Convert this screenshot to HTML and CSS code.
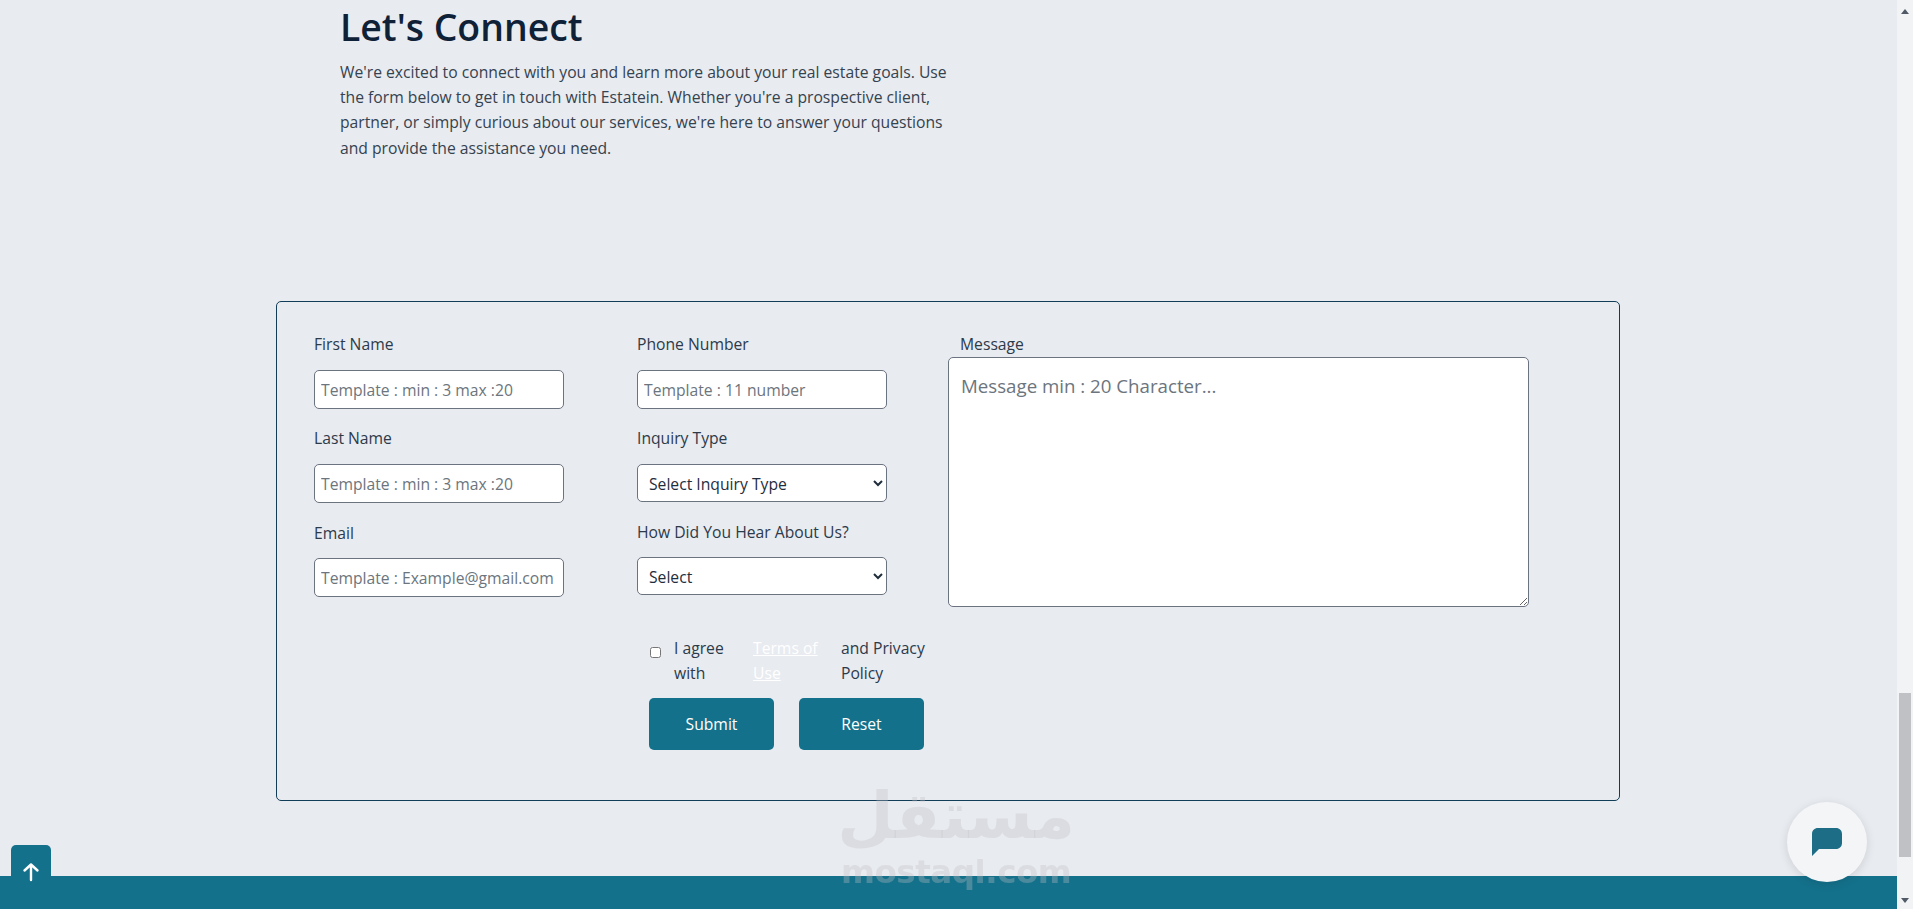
FILE: index.html
```html
<!DOCTYPE html>
<html lang="en">
<head>
<meta charset="utf-8">
<title>Let's Connect</title>
<link rel="stylesheet" href="styles.css">
</head>
<body>
<main class="page">
  <section class="intro">
    <h1>Let's Connect</h1>
    <p>We're excited to connect with you and learn more about your real estate goals. Use the form below to get in touch with Estatein. Whether you're a prospective client, partner, or simply curious about our services, we're here to answer your questions and provide the assistance you need.</p>
  </section>
  <form class="panel">
    <div class="fields">
      <div class="col col-a">
        <div class="field"><label>First Name</label><input type="text" placeholder="Template : min : 3 max :20"></div>
        <div class="field"><label>Last Name</label><input type="text" placeholder="Template : min : 3 max :20"></div>
        <div class="field"><label>Email</label><input type="text" placeholder="Template : Example@gmail.com"></div>
      </div>
      <div class="col col-b">
        <div class="field"><label>Phone Number</label><input type="text" placeholder="Template : 11 number"></div>
        <div class="field"><label>Inquiry Type</label><select><option>Select Inquiry Type</option></select></div>
        <div class="field"><label>How Did You Hear About Us?</label><select><option>Select</option></select></div>
      </div>
      <div class="col col-c">
        <label class="msg-label">Message</label>
        <textarea placeholder="Message min : 20 Character..."></textarea>
      </div>
    </div>
    <div class="consent">
      <input type="checkbox" class="check">
      <span>I agree with</span>
      <a href="#" class="terms">Terms of Use</a>
      <span>and Privacy Policy</span>
    </div>
    <div class="actions">
      <button type="button" class="btn">Submit</button>
      <button type="button" class="btn">Reset</button>
    </div>
  </form>
  <footer class="footer"></footer>
</main>

<div class="to-top">
  <svg width="18" height="20" viewBox="0 0 18 20" fill="none" stroke="#fff" stroke-width="2.4" stroke-linecap="round" stroke-linejoin="round"><path d="M9 18V2.5M2.5 8.5 9 2.5l6.500 6"/></svg>
</div>

<div class="watermark">
  <div class="wm-ar" lang="ar" dir="rtl">مستقل</div>
  <div class="wm-en">mostaql.com</div>
</div>

<div class="chat">
  <svg width="30" height="28" viewBox="0 0 30 28"><path d="M6 0H24C27.500 0 30 2.500 30 6V15C30 18.500 27.500 21 24 21H7L0 28V6C0 2.500 2.500 0 6 0Z" fill="#1e6d87"/></svg>
</div>

<div class="scrollbar">
  <span class="sb-up"></span>
  <span class="sb-thumb"></span>
  <span class="sb-down"></span>
</div>
</body>
</html>
```
FILE: styles.css
```css
* { box-sizing: border-box; }
html, body { margin: 0; height: 909px; overflow: hidden; }
body {
  background: #e8ebf0;
  color: #2c3a4a;
  font-family: "Open Sans", "Noto Sans", sans-serif;
  font-size: 15.7px;
  line-height: 25px;
}
.page { height: 909px; overflow: hidden; padding-right: 16px; }

.intro { margin-left: 340px; width: 618px; height: 301px; }
.intro h1 {
  margin: 0;
  padding-top: 3px;
  height: 60px;
  font-size: 37.4px;
  line-height: 48px;
  font-weight: 600;
  color: #0f2137;
}
.intro p { margin: 0; line-height: 25.2px; color: #35424f; }

.panel {
  margin-left: 276px;
  width: 1344px;
  height: 500px;
  border: 1px solid #123d58;
  border-radius: 5px;
  padding: 30px 0 0 37px;
}
.fields { display: flex; height: 275px; }
.col-a { width: 250px; margin-right: 73px; }
.col-b { width: 250px; margin-right: 61px; }
.col-c { width: 581px; }
.field { margin-bottom: 17px; }
.field label { display: block; height: 24px; line-height: 25px; margin-bottom: 13.5px; }
.field:last-child label { line-height: 27px; }
.msg-label { display: block; height: 25px; line-height: 24px; padding-left: 12px; }

input[type="text"], select, textarea {
  display: block;
  width: 100%;
  background: #fff;
  border: 1px solid #6b7280;
  border-radius: 5px;
  font: inherit;
  color: #1f2d3d;
  outline: none;
}
input[type="text"] { height: 39.5px; padding: 2px 6px 0; }
select { height: 38.5px; padding: 2px 7px 0; }
textarea {
  height: 250px;
  padding: 14px 12px;
  font-size: 18.7px;
  line-height: 28px;
  resize: both;
}
::placeholder { color: #6c757d; opacity: 1; }

.consent {
  display: grid;
  grid-template-columns: 25px 79px 88px 92px;
  margin: 29px 0 12px 335px;
}
.check { width: 11px; height: 11px; margin: 11px 0 0 1px; }
.terms { color: #fff; }
.actions { display: flex; gap: 25px; margin-left: 335px; }
.btn {
  width: 125px;
  height: 52px;
  background: #14718b;
  border: 0;
  border-radius: 5px;
  color: #fff;
  font: inherit;
}

.footer { height: 40px; margin-top: 75px; background: #14718b; }

.to-top {
  position: fixed;
  left: 11px;
  top: 845px;
  width: 40px;
  height: 40px;
  border-radius: 5px;
  background: #14718b;
  display: flex;
  justify-content: center;
  padding-top: 17px;
}

.watermark {
  position: fixed;
  left: 841px;
  top: 778px;
  width: 230px;
  text-align: center;
  color: rgba(190, 190, 195, 0.33);
  pointer-events: none;
  font-weight: 700;
}
.wm-ar { font-family: "DejaVu Sans", sans-serif; font-size: 65px; line-height: 76px; height: 74px; transform: translateX(4px); }
.wm-en { font-family: "DejaVu Sans", sans-serif; font-size: 32.6px; line-height: 40px; letter-spacing: -0.5px; }

.chat {
  position: fixed;
  left: 1787px;
  top: 802px;
  width: 80px;
  height: 80px;
  border-radius: 50%;
  background: #f4f5f7;
  box-shadow: 0 2px 10px rgba(0, 0, 0, 0.12);
  padding: 26px 0 0 25px;
}

.scrollbar {
  position: fixed;
  right: 0;
  top: 0;
  width: 16px;
  height: 909px;
  background: #f2f3f5;
}
.sb-thumb { position: absolute; left: 2px; top: 693px; width: 12px; height: 164px; background: #bfc1c5; }
.sb-up, .sb-down { position: absolute; left: 4px; width: 0; height: 0; border-left: 4px solid transparent; border-right: 4px solid transparent; }
.sb-up { top: 9px; border-bottom: 5px solid #505a66; }
.sb-down { top: 898px; border-top: 5px solid #505a66; }
```
